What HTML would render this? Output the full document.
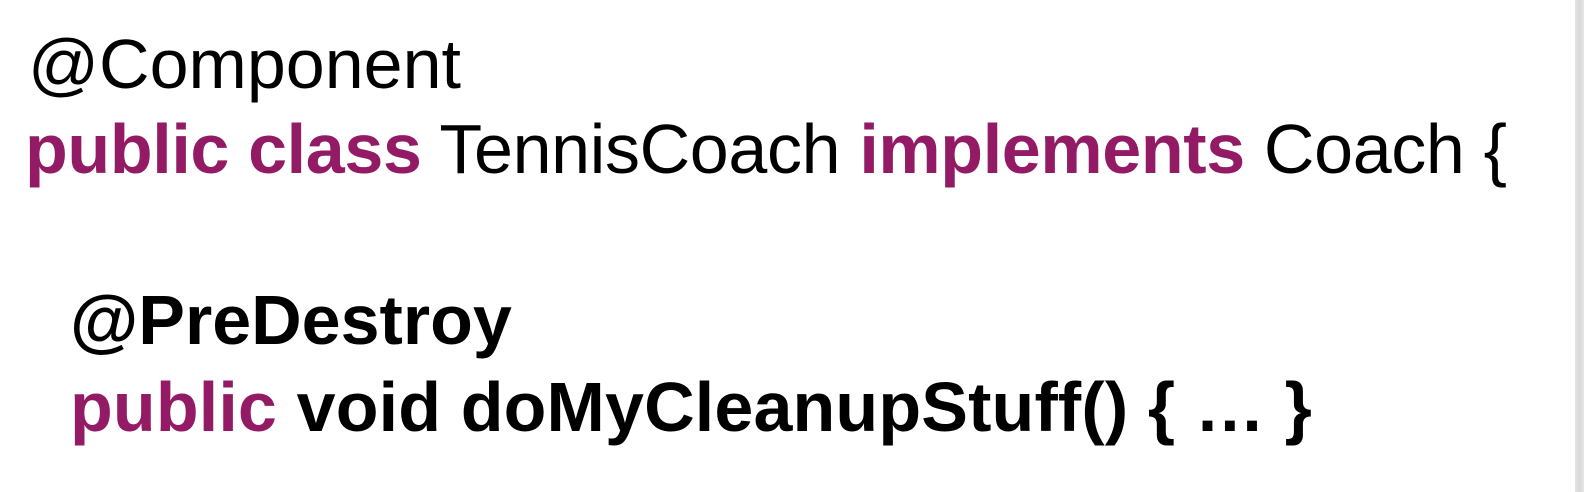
<!DOCTYPE html>
<html><head><style>
html,body{margin:0;padding:0;}
body{width:1584px;height:492px;background:#fff;position:relative;overflow:hidden;font-family:"Liberation Sans",Arial,sans-serif;font-size:70px;color:#000;}
.edge{position:absolute;right:0;top:0;width:9px;height:492px;background:linear-gradient(to right,#e6e6e6,#d8d8d8,#e8e8e8);}
.l{position:absolute;white-space:pre;line-height:1;}
.p{color:#931b65;font-weight:bold;}
.b{font-weight:bold;}
</style></head><body>
<div class="edge"></div>
<div class="l" style="left:28px;top:29px;">@Component</div>
<div class="l" style="left:25px;top:114px;letter-spacing:-0.35px;"><span class="p">public class</span> TennisCoach <span class="p">implements</span> Coach {</div>
<div class="l b" style="left:70px;top:285px;">@PreDestroy</div>
<div class="l b" style="left:70px;top:372px;letter-spacing:0.15px;"><span class="p">public</span> void doMyCleanupStuff() { … }</div>
</body></html>
